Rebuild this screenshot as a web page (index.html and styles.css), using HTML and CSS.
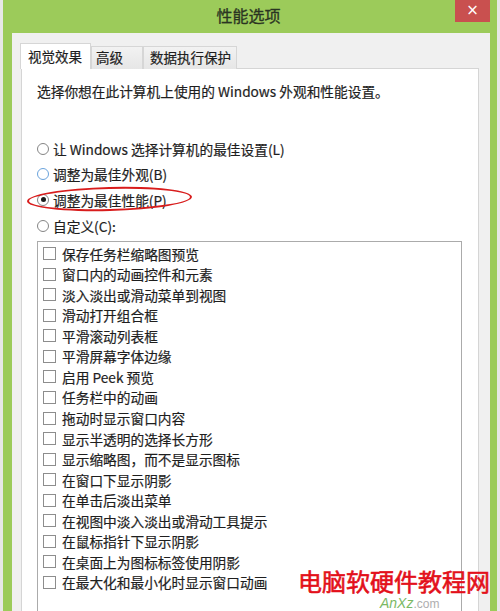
FILE: index.html
```html
<!DOCTYPE html>
<html lang="zh-CN">
<head>
<meta charset="utf-8">
<title>性能选项</title>
<link rel="stylesheet" href="styles.css">
</head>
<body>
<div class="window">
  <div class="titlebar">
    <div class="title">性能选项</div>
    <div class="close">×</div>
  </div>
  <div class="panel">
    <div class="tabs">
      <div class="tab tab-visual active">视觉效果</div>
      <div class="tab tab-adv">高级</div>
      <div class="tab tab-dep">数据执行保护</div>
    </div>
    <div class="content">
      <div class="intro">选择你想在此计算机上使用的 Windows 外观和性能设置。</div>
      <div class="radios">
        <div class="radio-row"><span class="radio"></span><span>让 Windows 选择计算机的最佳设置(L)</span></div>
        <div class="radio-row"><span class="radio hover"></span><span>调整为最佳外观(B)</span></div>
        <div class="radio-row marked"><span class="radio checked"></span><span>调整为最佳性能(P)</span><span class="ellipse"></span></div>
        <div class="radio-row"><span class="radio"></span><span>自定义(C):</span></div>
      </div>
      <div class="listbox">
        <div class="item"><span class="check"></span>保存任务栏缩略图预览</div>
        <div class="item"><span class="check"></span>窗口内的动画控件和元素</div>
        <div class="item"><span class="check"></span>淡入淡出或滑动菜单到视图</div>
        <div class="item"><span class="check"></span>滑动打开组合框</div>
        <div class="item"><span class="check"></span>平滑滚动列表框</div>
        <div class="item"><span class="check"></span>平滑屏幕字体边缘</div>
        <div class="item"><span class="check"></span>启用 Peek 预览</div>
        <div class="item"><span class="check"></span>任务栏中的动画</div>
        <div class="item"><span class="check"></span>拖动时显示窗口内容</div>
        <div class="item"><span class="check"></span>显示半透明的选择长方形</div>
        <div class="item"><span class="check"></span>显示缩略图，而不是显示图标</div>
        <div class="item"><span class="check"></span>在窗口下显示阴影</div>
        <div class="item"><span class="check"></span>在单击后淡出菜单</div>
        <div class="item"><span class="check"></span>在视图中淡入淡出或滑动工具提示</div>
        <div class="item"><span class="check"></span>在鼠标指针下显示阴影</div>
        <div class="item"><span class="check"></span>在桌面上为图标标签使用阴影</div>
        <div class="item"><span class="check"></span>在最大化和最小化时显示窗口动画</div>
      </div>
    </div>
  </div>
</div>
<div class="watermark-sub">AnXz<span class="dotcom">.com</span></div>
<div class="watermark">电脑软硬件教程网</div>
</body>
</html>
```
FILE: styles.css
```css
html, body {
  margin: 0;
  padding: 0;
}
body {
  width: 500px;
  height: 611px;
  overflow: hidden;
  background: #e8e8e8;
  font-family: "Noto Sans CJK SC", "Microsoft YaHei", sans-serif;
  color: #1e1e1e;
  position: relative;
}
.window {
  margin: 0 3px;
  height: 611px;
  background: #9ccb5a;
  padding: 0 7px 0 9px;
  box-sizing: border-box;
  display: flex;
  flex-direction: column;
  overflow: hidden;
}
.titlebar {
  height: 33px;
  flex: none;
  display: flex;
}
.title {
  flex: 1;
  text-align: center;
  padding-left: 30px;
  font-size: 16px;
  line-height: 31px;
  color: #2a3422;
  -webkit-text-stroke: 0.3px #2a3422;
}
.close {
  width: 35px;
  height: 22px;
  background: #c9504f;
  color: #fff;
  font-family: "DejaVu Sans", sans-serif;
  font-size: 15px;
  line-height: 21px;
  text-align: center;
}
.panel {
  flex: 1;
  background: #f0f0f0;
  padding: 10px 11px 0 9px;
  display: flex;
  flex-direction: column;
}
.tabs {
  display: flex;
  align-items: flex-end;
  margin-left: -1px;
  position: relative;
  z-index: 1;
  margin-bottom: -1px;
}
.tab {
  box-sizing: border-box;
  height: 23px;
  border: 1px solid #d6d6d6;
  border-bottom: none;
  background: linear-gradient(#f2f2f2, #e6e6e6);
  font-size: 13.5px;
  line-height: 21px;
  color: #1e1e1e;
  white-space: nowrap;
  -webkit-text-stroke: 0.2px #1e1e1e;
}
.tab.active {
  height: 26px;
  background: #fff;
  line-height: 24px;
}
.tab-visual { width: 71px; padding-left: 7px; }
.tab-adv { width: 52px; padding-left: 4px; }
.tab-dep { width: 94px; padding-left: 6px; }
.content {
  flex: 1;
  background: #fff;
  border: 1px solid #d5d5d5;
  padding: 12px 16px 0 15px;
  -webkit-text-stroke: 0.2px #1e1e1e;
}
.intro {
  font-size: 13.7px;
  line-height: 20px;
}
.radios {
  margin-top: 35px;
}
.radio-row {
  height: 25.6px;
  display: flex;
  align-items: center;
  font-size: 13.7px;
  position: relative;
}
.radio {
  width: 10px;
  height: 10px;
  border: 1px solid #858585;
  border-radius: 50%;
  margin-right: 4px;
  flex: none;
  display: flex;
  align-items: center;
  justify-content: center;
}
.radio.hover {
  border-color: #6aa3dc;
}
.radio.checked::after {
  content: "";
  width: 5px;
  height: 5px;
  border-radius: 50%;
  background: #1a1a1a;
}
.ellipse {
  position: absolute;
  left: -10px;
  top: 0;
  width: 161px;
  height: 20px;
  border: 2px solid #d81c1c;
  border-radius: 50%;
  transform: rotate(-1.5deg);
}
.listbox {
  margin-top: 3px;
  height: 420px;
  border: 1px solid #ababab;
  padding-top: 1px;
}
.item {
  height: 20.56px;
  display: flex;
  align-items: center;
  font-size: 13.7px;
  padding-left: 5px;
}
.check {
  width: 11px;
  height: 11px;
  border: 1px solid #8d8d8d;
  margin-right: 6px;
  flex: none;
}
.watermark {
  position: absolute;
  left: 298px;
  top: 569px;
  font-size: 24px;
  line-height: 24px;
  color: #e3101b;
  white-space: nowrap;
  -webkit-text-stroke: 0.6px #e3101b;
}
.watermark-sub {
  position: absolute;
  left: 380px;
  top: 597px;
  font-family: "Liberation Sans", sans-serif;
  font-size: 14px;
  line-height: 13px;
  color: #5aa83c;
  opacity: 0.8;
  font-style: italic;
  white-space: nowrap;
}
.dotcom {
  color: #9a9a9a;
  font-size: 12px;
  font-style: normal;
}
```
